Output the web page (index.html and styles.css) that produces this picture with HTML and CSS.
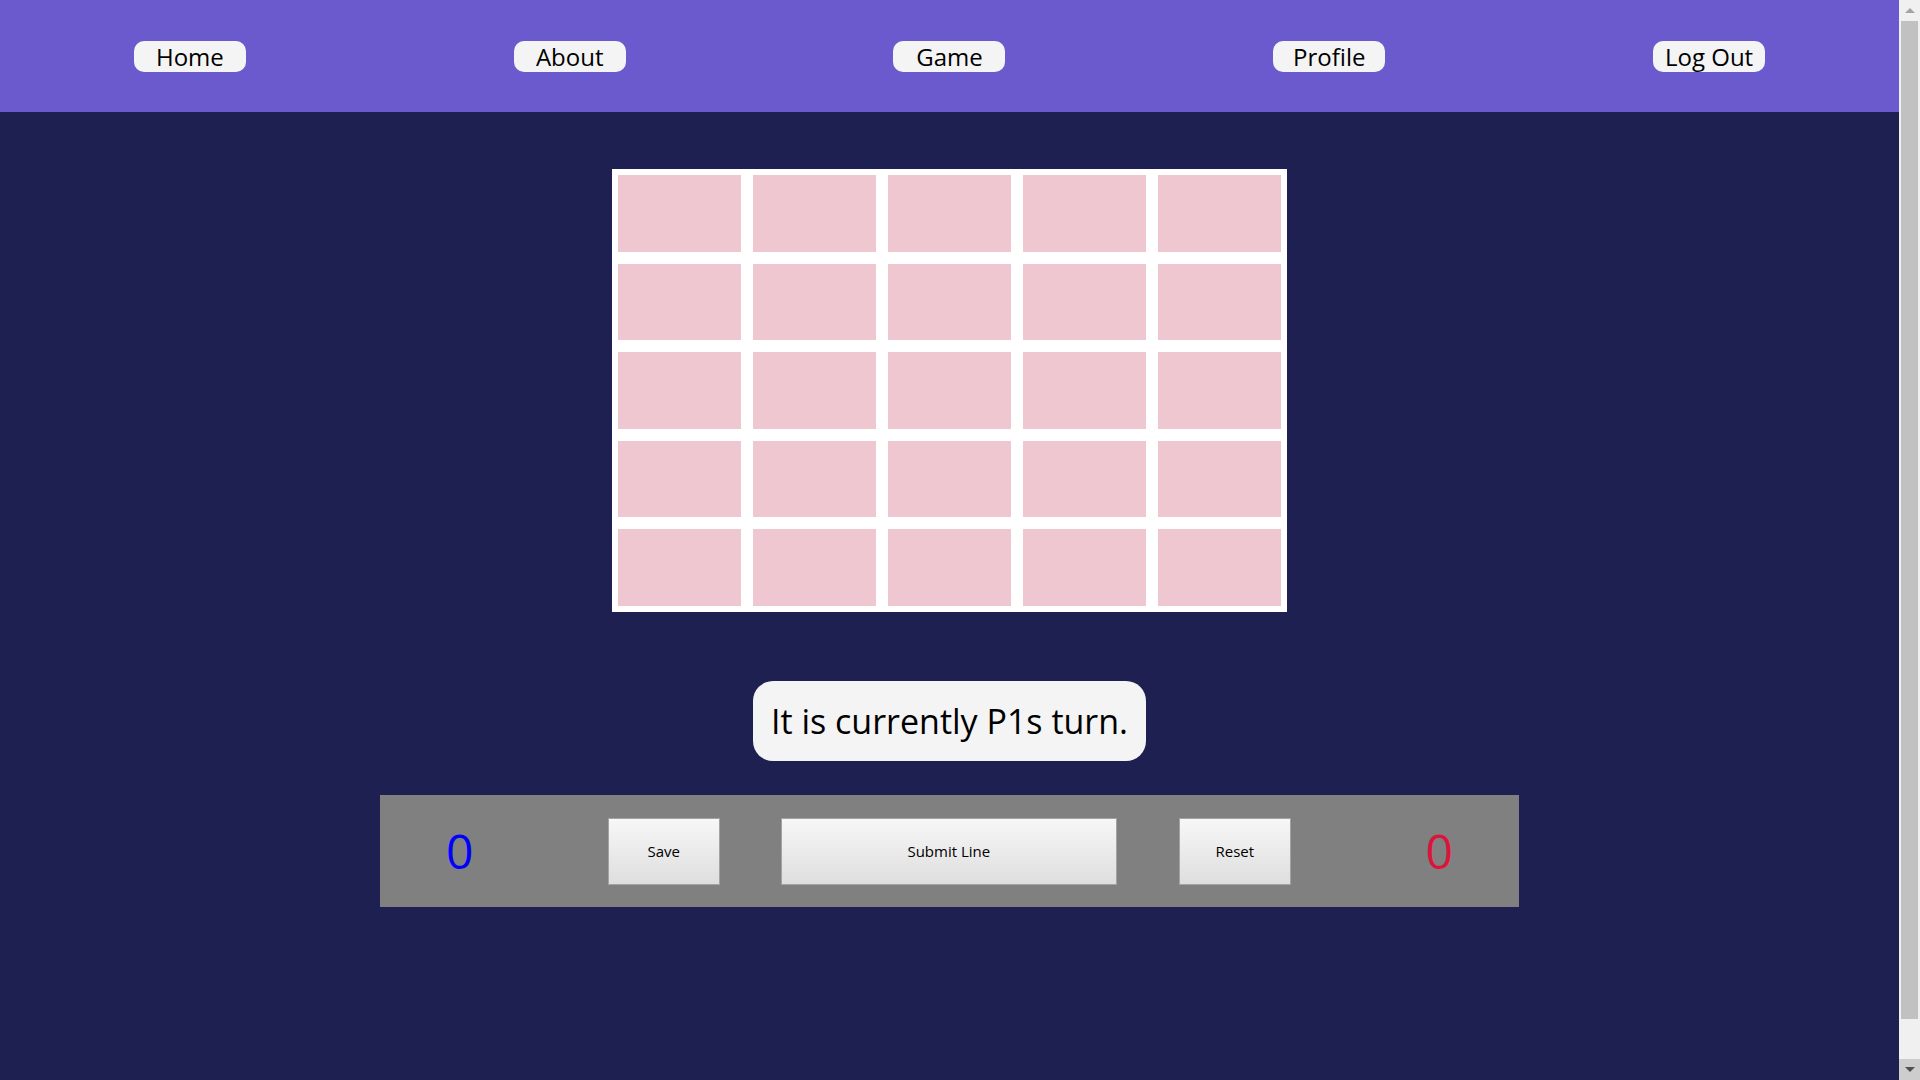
FILE: index.html
```html
<!DOCTYPE html>
<html lang="en">
<head>
<meta charset="utf-8">
<title>Game</title>
<link rel="stylesheet" href="styles.css">
</head>
<body>
<div class="page">
  <nav class="nav">
    <div class="nav-item"><a class="nav-btn" href="#">Home</a></div>
    <div class="nav-item"><a class="nav-btn" href="#">About</a></div>
    <div class="nav-item"><a class="nav-btn" href="#">Game</a></div>
    <div class="nav-item"><a class="nav-btn" href="#">Profile</a></div>
    <div class="nav-item"><a class="nav-btn" href="#">Log Out</a></div>
  </nav>
  <main class="main">
    <div class="board">
      <div class="cell"></div><div class="cell"></div><div class="cell"></div><div class="cell"></div><div class="cell"></div>
      <div class="cell"></div><div class="cell"></div><div class="cell"></div><div class="cell"></div><div class="cell"></div>
      <div class="cell"></div><div class="cell"></div><div class="cell"></div><div class="cell"></div><div class="cell"></div>
      <div class="cell"></div><div class="cell"></div><div class="cell"></div><div class="cell"></div><div class="cell"></div>
      <div class="cell"></div><div class="cell"></div><div class="cell"></div><div class="cell"></div><div class="cell"></div>
    </div>
    <div class="status">It is currently P1s turn.</div>
    <div class="controls">
      <div class="score score-p1">0</div>
      <button class="ctrl-btn ctrl-small ctrl-save">Save</button>
      <button class="ctrl-btn ctrl-wide">Submit Line</button>
      <button class="ctrl-btn ctrl-small ctrl-reset">Reset</button>
      <div class="score score-p2">0</div>
    </div>
  </main>
</div>
<div class="scrollbar" aria-hidden="true">
  <div class="sb-btn sb-up"><span class="arrow-up"></span></div>
  <div class="sb-track"><div class="sb-thumb"></div></div>
  <div class="sb-btn sb-down"><span class="arrow-down"></span></div>
</div>
</body>
</html>
```
FILE: styles.css
```css
html, body {
  margin: 0;
  padding: 0;
}
body {
  background: #1f2052;
  font-family: "Open Sans", "Noto Sans", sans-serif;
  color: #000;
}
.page {
  margin-right: 21px;
}
.nav {
  height: 112px;
  background: #6a5acd;
  display: flex;
  align-items: center;
}
.nav-item {
  flex: 1;
  display: flex;
  justify-content: center;
}
.nav-btn {
  display: block;
  width: 112px;
  height: 31px;
  line-height: 31px;
  border-radius: 10px;
  background: #f4f4f4;
  color: #000;
  text-decoration: none;
  text-align: center;
  font-size: 24px;
}
.main {
  display: flex;
  flex-direction: column;
  align-items: center;
  padding-top: 57px;
  padding-bottom: 240px;
}
.board {
  width: 675px;
  height: 443px;
  background: #fff;
  display: grid;
  grid-template-columns: repeat(5, 1fr);
  grid-template-rows: repeat(5, 1fr);
}
.cell {
  margin: 6px;
  background: #efc7d0;
}
.status {
  margin-top: 69px;
  height: 80px;
  box-sizing: border-box;
  padding: 0 18px;
  display: flex;
  align-items: center;
  background: #f4f4f4;
  border-radius: 20px;
  font-size: 34px;
}
.controls {
  margin-top: 34px;
  width: 60%;
  height: 112px;
  background: #808080;
  display: flex;
  align-items: center;
}
.score {
  width: 160px;
  flex: none;
  text-align: center;
  font-size: 48px;
  line-height: 1;
}
.score-p1 { color: #0000ff; }
.score-p2 { color: #dc143c; margin-left: auto; }
.ctrl-btn {
  flex: none;
  height: 67px;
  box-sizing: border-box;
  border: 1px solid #a3a3a3;
  background: linear-gradient(#f7f7f7, #dedede);
  font-family: "Open Sans", "Noto Sans", sans-serif;
  font-size: 15px;
  color: #000;
  padding: 0;
  margin-left: 61px;
}
.ctrl-save { margin-left: 68px; }
.ctrl-reset { margin-left: 62px; }
.ctrl-small { width: 112px; }
.ctrl-wide { width: 336px; }

/* drawn browser scrollbar */
.scrollbar {
  position: fixed;
  top: 0;
  right: 0;
  width: 21px;
  height: 100vh;
  background: #f0f0f0;
  display: flex;
  flex-direction: column;
}
.sb-btn {
  height: 21px;
  flex: none;
  display: flex;
  align-items: center;
  justify-content: center;
}
.sb-down {
  background: #cdcdcd;
}
.sb-track {
  flex: 1;
  padding: 0 2px 40px;
}
.sb-thumb {
  height: 100%;
  background: #c1c1c1;
}
.arrow-up {
  width: 0;
  height: 0;
  border-left: 5px solid transparent;
  border-right: 5px solid transparent;
  border-bottom: 5px solid #a3a3a3;
}
.arrow-down {
  width: 0;
  height: 0;
  border-left: 5px solid transparent;
  border-right: 5px solid transparent;
  border-top: 5px solid #505050;
}
```
